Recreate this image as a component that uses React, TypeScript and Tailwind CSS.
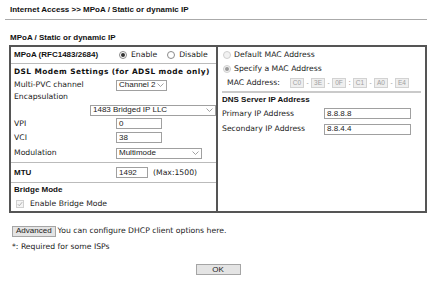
import React from "react";

const body = "font-['DejaVu_Sans',sans-serif] text-[7.7px] text-[#222]";
const head = "font-['Liberation_Sans',Arial,sans-serif] font-bold text-[8px] text-[#111]";
const field = "font-['Liberation_Sans',Arial,sans-serif] text-[8px] text-[#222]";

function Radio({ checked, disabled }: { checked?: boolean; disabled?: boolean }) {
  return (
    <span
      className={`inline-flex w-[8px] h-[8px] rounded-full border items-center justify-center shrink-0 ${
        disabled ? "border-[#cfcfcf] bg-[#f2f2f2]" : "border-[#8a8a8a] bg-white"
      }`}
    >
      {checked && <span className={`w-[4px] h-[4px] rounded-full ${disabled ? "bg-[#9a9a9a]" : "bg-[#333]"}`} />}
    </span>
  );
}

function Chevron() {
  return (
    <svg width="7" height="4" viewBox="0 0 7 4" className="shrink-0">
      <path d="M0.5 0.5 L3.5 3.5 L6.5 0.5" fill="none" stroke="#8a8a8a" strokeWidth="0.8" />
    </svg>
  );
}

function Select({ value, className }: { value: string; className: string }) {
  return (
    <div className={`h-[11px] border border-[#a0a0a0] bg-white flex items-center justify-between pl-[2px] pr-[2px] gap-[2px] overflow-hidden whitespace-nowrap ${field} ${className}`}>
      <span className="leading-none">{value}</span>
      <Chevron />
    </div>
  );
}

function Input({ value, className }: { value: string; className: string }) {
  return (
    <div className={`h-[11px] border border-[#a0a0a0] bg-white flex items-center pl-[2px] whitespace-nowrap ${field} ${className}`}>
      <span className="leading-none">{value}</span>
    </div>
  );
}

function MacBox({ v }: { v: string }) {
  return (
    <span className="w-[14px] h-[10px] border border-[#d2d2d2] bg-[#efefef] text-[#a0a0a0] flex items-center justify-center font-['Liberation_Sans',Arial,sans-serif] text-[6.5px] leading-none">
      {v}
    </span>
  );
}

function MacSep({ c }: { c: string }) {
  return <span className="w-[7px] text-center text-[#999] text-[6.5px] leading-none">{c}</span>;
}

function Row({ label, h, children }: { label: string; h: string; children?: React.ReactNode }) {
  return (
    <div className={`flex items-center ${h}`}>
      <span className={`w-[103px] pl-[1px] ${body}`}>{label}</span>
      {children}
    </div>
  );
}

export default function App() {
  const mac = ["C0", "3E", "0F", "C1", "A0", "E4"];
  const seps = ["-", "-", ":", "-", "-"];
  return (
    <div className="w-[435px] h-[283px] bg-white overflow-hidden">
      <div className={`ml-[5px] w-[422px] h-[20px] border-b border-[#aaa] flex items-center pl-[5px] ${head}`}>
        Internet Access &gt;&gt; MPoA / Static or dynamic IP
      </div>
      <div className={`mt-[10px] h-[15px] flex items-center pl-[10px] ${head} text-[7.6px]`}>MPoA / Static or dynamic IP</div>

      <div className="ml-[9px] w-[418px] h-[168px] border-2 border-[#555] flex">
        {/* left cell */}
        <div className="w-[205px] pl-[2px] flex flex-col">
          <div className="h-[17px] border-b border-[#bbb] -ml-[2px] pl-[2px] flex items-center">
            <span className={`w-[105px] pl-[1px] ${head} text-[8.4px]`}>MPoA (RFC1483/2684)</span>
            <span className={`flex items-center gap-[4px] ${body} ml-[1px]`}>
              <Radio checked />
              <span>Enable</span>
              <span className="w-[2px]" />
              <Radio />
              <span>Disable</span>
            </span>
          </div>
          <div className="h-[15px] flex items-center pl-[1px] whitespace-nowrap font-['DejaVu_Sans',sans-serif] font-bold text-[7.4px] tracking-[0.45px] text-[#111]">
            DSL Modem Settings (for ADSL mode only)
          </div>
          <Row label="Multi-PVC channel" h="h-[12px]">
            <Select value="Channel 2" className="w-[51px]" />
          </Row>
          <Row label="Encapsulation" h="h-[12px]" />
          <div className="h-[14px] flex items-center pl-[77px]">
            <Select value="1483 Bridged IP LLC" className="w-[127px]" />
          </div>
          <Row label="VPI" h="h-[13px]">
            <Input value="0" className="w-[46px]" />
          </Row>
          <Row label="VCI" h="h-[15px]">
            <Input value="38" className="w-[46px]" />
          </Row>
          <div className="h-[18px] border-b border-[#bbb] -ml-[2px] pl-[2px] flex items-center pb-[1px]">
            <span className={`w-[103px] pl-[1px] ${body}`}>Modulation</span>
            <Select value="Multimode" className="w-[86px]" />
          </div>
          <div className="h-[20px] border-b border-[#bbb] -ml-[2px] pl-[2px] flex items-center">
            <span className={`w-[103px] pl-[1px] ${head} text-[7.3px]`}>MTU</span>
            <Input value="1492" className="w-[32px]" />
            <span className={`ml-[5px] ${body}`}>(Max:1500)</span>
          </div>
          <div className={`h-[14px] flex items-center pl-[1px] ${head} text-[7.3px]`}>Bridge Mode</div>
          <div className={`h-[14px] flex items-center pl-[3px] gap-[6px] ${body}`}>
            <span className="w-[8px] h-[8px] border border-[#cfcfcf] bg-[#f4f4f4] flex items-center justify-center">
              <svg width="6" height="6" viewBox="0 0 6 6">
                <path d="M0.8 3.2 L2.3 4.7 L5.2 1.2" fill="none" stroke="#a8a8a8" strokeWidth="0.9" />
              </svg>
            </span>
            <span>Enable Bridge Mode</span>
          </div>
        </div>

        {/* right cell */}
        <div className="flex-1 border-l-2 border-[#555] flex flex-col">
          <div className={`h-[15px] flex items-center pl-[5px] gap-[3px] ${body}`}>
            <Radio disabled />
            <span>Default MAC Address</span>
          </div>
          <div className={`h-[14px] flex items-center pl-[5px] gap-[3px] ${body}`}>
            <Radio checked disabled />
            <span>Specify a MAC Address</span>
          </div>
          <div className="h-[14px] flex items-center pl-[9px]">
            <span className={`w-[63px] ${body}`}>MAC Address:</span>
            {mac.map((m, i) => (
              <React.Fragment key={m}>
                <MacBox v={m} />
                {i < seps.length && <MacSep c={seps[i]} />}
              </React.Fragment>
            ))}
          </div>
          <div className="mt-[1px] mx-[4px] h-[2px] bg-[#cacaca]" />
          <div className={`h-[13px] flex items-center pl-[4px] ${head}`}>DNS Server IP Address</div>
          <div className="h-[15px] flex items-center pl-[4px]">
            <span className={`w-[102px] ${body}`}>Primary IP Address</span>
            <Input value="8.8.8.8" className="w-[87px]" />
          </div>
          <div className="h-[16px] flex items-center pl-[4px]">
            <span className={`w-[102px] ${body}`}>Secondary IP Address</span>
            <Input value="8.8.4.4" className="w-[87px]" />
          </div>
        </div>
      </div>

      <div className="mt-[12px] h-[12px] flex items-center pl-[12px]">
        <button className={`h-[11px] px-[3px] border border-[#a5a5a5] bg-[#e4e4e4] flex items-center ${field} leading-none`}>
          Advanced
        </button>
        <span className={`ml-[2px] ${body}`}>You can configure DHCP client options here.</span>
      </div>
      <div className={`mt-[4px] h-[12px] flex items-center pl-[12px] ${body}`}>*: Required for some ISPs</div>
      <div className="mt-[11px] flex justify-center pl-[1px]">
        <button className={`w-[45px] h-[11px] border border-[#a5a5a5] bg-[#e4e4e4] flex items-center justify-center ${field} leading-none`}>
          OK
        </button>
      </div>
    </div>
  );
}
